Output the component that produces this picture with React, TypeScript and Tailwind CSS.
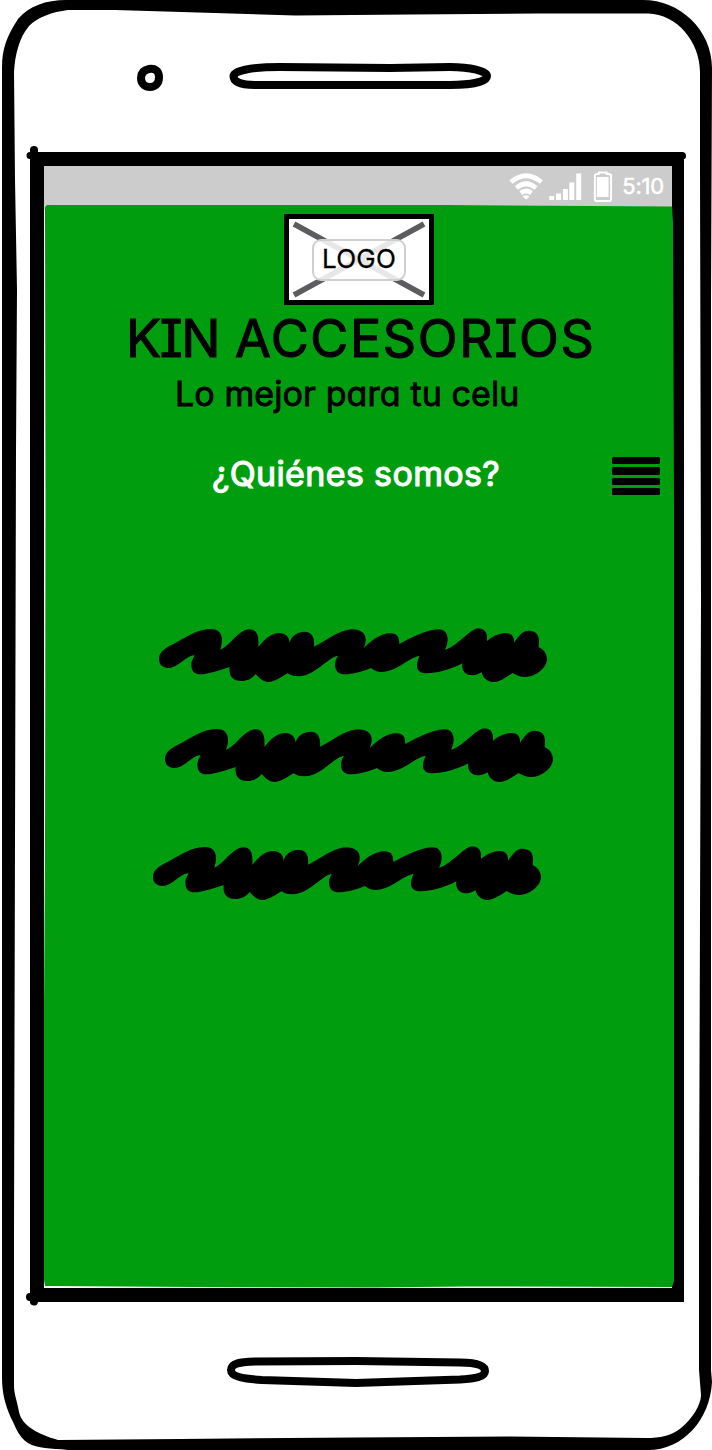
function PhoneFrame() {
  return (
    <svg className="absolute inset-0 h-[1450px] w-[712px]" viewBox="0 0 712 1450" aria-hidden="true">
      <path
        fillRule="evenodd"
        d="M2 68C2 48 7 36 18 19C29 6 46 0 66 0H643C680 0 712 30 712 68L711 300V1370L712 1382C710 1420 683 1450 648 1450H68C50 1448 38 1449 28 1443C18 1437 15 1425 11 1418C5 1405 2 1392 2 1378ZM14 72C15 55 19 38 29 26C38 17 52 12 68 10H115L295 15.5L410 14.5L535 13.5H648C677 14 700 42 700 72V170L701 600L699 1230V1370L701 1395C701 1405 692 1419 681 1428C671 1436 660 1438 646 1438L510 1436.5L356 1437.5L180 1439L58 1440C38 1434 22 1426 19 1412C17 1400 14 1395 14 1385V1230L16 450L17 290L15 180Z"
      />
      <path d="M30 150A4 4 0 0 1 38 150V152H682Q686 152 686 156Q686 159 684 159V1302H38A4 4 0 0 1 30 1301A4 4 0 0 1 30 1293V159A3.5 3.5 0 0 1 30 152Z" />
      <g fill="none" stroke="#000">
        <path strokeWidth="8" d="M149 69C155 68 159 71 159 77C159 83 156 87 150 87C144 87 141 83 141 78C141 73 144 70 149 69Z" />
        <path strokeWidth="8" d="M233.500 76C233.500 70 255 67 280 67L390 68L450 67C470 67 487 71 487 76C487 82 470 85 450 85H255C241 85 233.500 82 233.500 76Z" />
        <path strokeWidth="8" d="M231 1370C231 1363 240 1362 255 1361.500L356 1361L460 1362.500C478 1362.500 485 1366 485 1371C485 1377 475 1378.500 460 1379.500L356 1383L262 1380C245 1379 231 1377 231 1370Z" />
      </g>
    </svg>
  );
}

function StatusBar() {
  return (
    <header className="flex h-[39px] w-[628px] items-center justify-end pr-2">
      <svg className="h-10 w-[108px]" viewBox="0 0 110 40" preserveAspectRatio="none" fill="#fff" aria-hidden="true">
        <g fill="none" stroke="#fff" strokeWidth="4.800">
          <path d="M4 16Q19.500 3.500 35 16" />
          <path d="M9.500 22Q19.500 13.500 29.500 22" />
          <path d="M14 27Q19.500 23 25 27" />
        </g>
        <path d="M16.500 30Q19.500 28.500 22.500 30V31L19.500 33.500L16.500 31Z" />
        <path d="M43 30h5v4h-5zM50 27.500h5V34h-5zM57 23h5v11h-5zM63.500 16.500h5V34h-5zM70.500 7.500h5V34h-5z" />
        <path d="M91.500 11h12v20h-12z" />
        <path fill="none" stroke="#fff" strokeWidth="2" d="M91 8h2.500V6.500h8V8h2.500l2 1V34l-1 1H90.500l-1-1V9z" />
      </svg>
      <time className="ml-[7px] pt-[2px] font-[Inter] text-[22px] tracking-[-0.2px] text-white [-webkit-text-stroke:0.500px_white]">5:10</time>
    </header>
  );
}

function Logo() {
  return (
    <div className="relative flex h-[91px] w-[150px] items-center justify-center border-[5px] border-black bg-white">
      <svg className="absolute inset-0 h-full w-full" viewBox="0 0 140 81" aria-hidden="true">
        <path d="M5 5L135 76M5 76L135 5" stroke="#5c5c5e" strokeWidth="5.500" />
      </svg>
      <div className="relative flex h-[42px] w-[94px] items-center justify-center rounded-[9px] border-2 border-[#cfcfcf] bg-white/85 font-[Inter] text-[26px] tracking-[0.200px] [-webkit-text-stroke:0.300px_black]">
        <span className="pb-[2px]">LOGO</span>
      </div>
    </div>
  );
}

function MenuButton() {
  return (
    <button aria-label="Menú" className="flex flex-col gap-[3px]">
      <span className="h-[7.250px] w-12 rounded-[1.500px] bg-black" />
      <span className="h-[7.250px] w-12 rounded-[1.500px] bg-black" />
      <span className="h-[7.250px] w-12 rounded-[1.500px] bg-black" />
      <span className="h-[7.250px] w-12 rounded-[1.500px] bg-black" />
    </button>
  );
}

function Scribble() {
  return (
    <svg className="h-[54px] w-[388px]" viewBox="27 54 1164 162" aria-hidden="true">
      <path d="M27 148C27 125 45 115 80 97C115 77 145 58 180 57C205 56 216 70 216 90C216 103 213 112 210 119C235 114 265 57 300 58C320 60 328 75 325 111C345 85 365 69 388 69C405 69 418 80 419 98C425 75 445 65 463 65C485 66 495 80 492 110C530 92 565 60 605 58C635 58 648 72 647 90C647 102 643 108 641 114C665 92 690 70 722 70C740 70 748 80 748 102C780 85 825 60 865 58C885 58 893 72 893 88C893 102 889 112 885 119C915 112 955 64 978 56C995 53 1010 60 1011 80V93C1030 75 1055 69 1067 69C1085 69 1093 80 1092 98C1105 80 1115 63 1135 62C1158 62 1168 75 1167 95L1166 111C1180 118 1191 130 1191 148C1190 175 1155 202 1125 201C1110 201 1098 196 1088 189C1070 200 1050 216 1030 216C1012 216 998 203 995 187C982 195 973 196 965 196C945 195 934 180 937 160C905 178 860 190 830 190C810 190 800 180 801 165C802 152 806 145 809 138C780 140 740 186 695 186C683 186 672 182 663 174C640 184 605 193 585 193C563 193 555 180 555 162C556 150 560 145 564 138C535 140 495 199 445 199C430 199 420 195 413 190C395 200 375 216 355 216C340 216 328 205 317 192C305 207 290 213 275 213C245 213 236 195 239 171C210 180 175 193 152 193C130 193 124 180 124 162C125 150 130 145 134 136C110 135 85 174 55 174C38 174 27 163 27 148Z" />
    </svg>
  );
}

export default function App() {
  return (
    <div className="relative h-[1450px] w-[712px] overflow-hidden bg-white text-black">
      <PhoneFrame />
      <div className="relative flex flex-col pt-[166px] pl-11">
        <div className="flex h-[1122px] w-[628px] flex-col bg-[linear-gradient(#cccccc_44px,#ffffff_44px)]">
          <StatusBar />
          <main className="flex h-[1082.500px] w-[630px] flex-col bg-[#009e0f] [clip-path:polygon(1px_2px,3px_0px,400px_0px,628px_1.500px,629px_18px,630px_300px,630px_1076px,628px_1082px,420px_1081.500px,330px_1082.500px,150px_1082px,1px_1081px,0px_1075px,0px_800px,1px_640px,1.500px_300px)]">
            <div className="mt-[9px] ml-60">
              <Logo />
            </div>
            <h1 className="mt-1 ml-[82px] h-[60px] font-[Inter] text-[52px] leading-[60px] font-normal whitespace-nowrap [font-feature-settings:'cv08','ss02'] [-webkit-text-stroke:1.200px_black]">
              <span className="tracking-[-1.300px]">KIN</span>
              <span className="tracking-[1.650px] [word-spacing:-0.500px]"> ACCESORIOS</span>
            </h1>
            <p className="mt-[3px] ml-[131px] h-[44px] font-[Inter] text-[34px] leading-[44px] tracking-[0.100px] whitespace-nowrap [font-feature-settings:'cv11'] [-webkit-text-stroke:0.900px_black]">
              Lo mejor para tu celu
            </p>
            <div className="mt-[38px] flex h-[44px] w-[616px] items-center justify-between pl-[168px]">
              <h2 className="pb-[5px] font-[Inter] text-[34px] leading-[44px] font-normal tracking-[0.350px] whitespace-nowrap text-white [-webkit-text-stroke:1.100px_white]">
                ¿Quiénes somos?
              </h2>
              <MenuButton />
            </div>
            <section className="mt-[130px] flex flex-col">
              <div className="ml-[115px] h-[54px]"><Scribble /></div>
              <div className="mt-[46px] ml-[121px] h-[54px]"><Scribble /></div>
              <div className="mt-[64px] ml-[109px] h-[54px]"><Scribble /></div>
            </section>
          </main>
        </div>
      </div>
    </div>
  );
}
